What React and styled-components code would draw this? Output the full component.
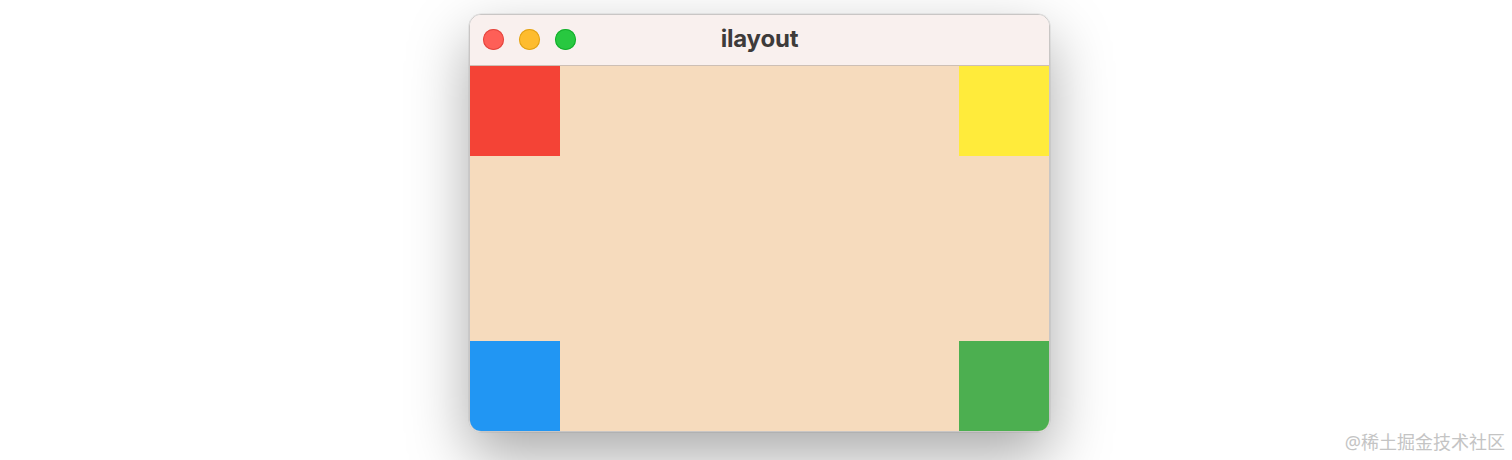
import React from 'react';
import styled, { createGlobalStyle } from 'styled-components';

const GlobalStyle = createGlobalStyle`
  html, body {
    margin: 0;
    padding: 0;
    background: #ffffff;
    font-family: Inter, "Noto Sans", "Liberation Sans", sans-serif;
  }
`;

const Page = styled.div`
  position: relative;
  width: 1512px;
  height: 460px;
  overflow: hidden;
  padding: 14px 0 0 469px;
  box-sizing: border-box;
`;

// 창 전체
const Window = styled.div`
  width: 581px;
  height: 418px;
  box-sizing: border-box;
  border: 1px solid #c9c6c5;
  border-radius: 12px;
  overflow: hidden;
  display: flex;
  flex-direction: column;
  box-shadow: 0 24px 60px rgba(0, 0, 0, 0.34), 0 0 0 0.5px rgba(0, 0, 0, 0.1);
`;

const TitleBar = styled.div`
  position: relative;
  height: 50px;
  flex-shrink: 0;
  display: flex;
  align-items: center;
  justify-content: center;
  background: #f9f0ee;
  border-bottom: 1px solid #cdbfb5;
`;

const Lights = styled.div`
  position: absolute;
  left: 13px;
  top: 14px;
  display: flex;
  gap: 15px;
`;

const Light = styled.span`
  width: 21px;
  height: 21px;
  border-radius: 50%;
  background: ${({ color }) => color};
  box-shadow: inset 0 0 0 1px ${({ edge }) => edge};
`;

const Title = styled.div`
  font-size: 24px;
  font-weight: 700;
  color: #3e3b3a;
  letter-spacing: -0.2px;
  margin-bottom: 3px;
`;

// 본문: 네 모서리에 색 상자
const Content = styled.div`
  flex: 1;
  background: #f6dbbd;
  display: flex;
  flex-direction: column;
  justify-content: space-between;
`;

const Row = styled.div`
  display: flex;
  justify-content: space-between;
`;

const Box = styled.div`
  width: 90px;
  height: 90px;
  background: ${({ color }) => color};
`;

const Watermark = styled.div`
  position: absolute;
  right: 7px;
  bottom: 6px;
  font-size: 18px;
  color: #c4c4c4;
  font-family: "Noto Sans", "Noto Sans CJK SC", sans-serif;
`;

export default function App() {
  return (
    <>
      <GlobalStyle />
      <Page>
        <Window>
          <TitleBar>
            <Lights>
              <Light color="#fe5f57" edge="#e2463f" />
              <Light color="#febc2e" edge="#e1a116" />
              <Light color="#28c840" edge="#14ae2c" />
            </Lights>
            <Title>ilayout</Title>
          </TitleBar>
          <Content>
            <Row>
              <Box color="#f44336" />
              <Box color="#ffeb3b" />
            </Row>
            <Row>
              <Box color="#2196f3" />
              <Box color="#4caf50" />
            </Row>
          </Content>
        </Window>
        <Watermark>@稀土掘金技术社区</Watermark>
      </Page>
    </>
  );
}
